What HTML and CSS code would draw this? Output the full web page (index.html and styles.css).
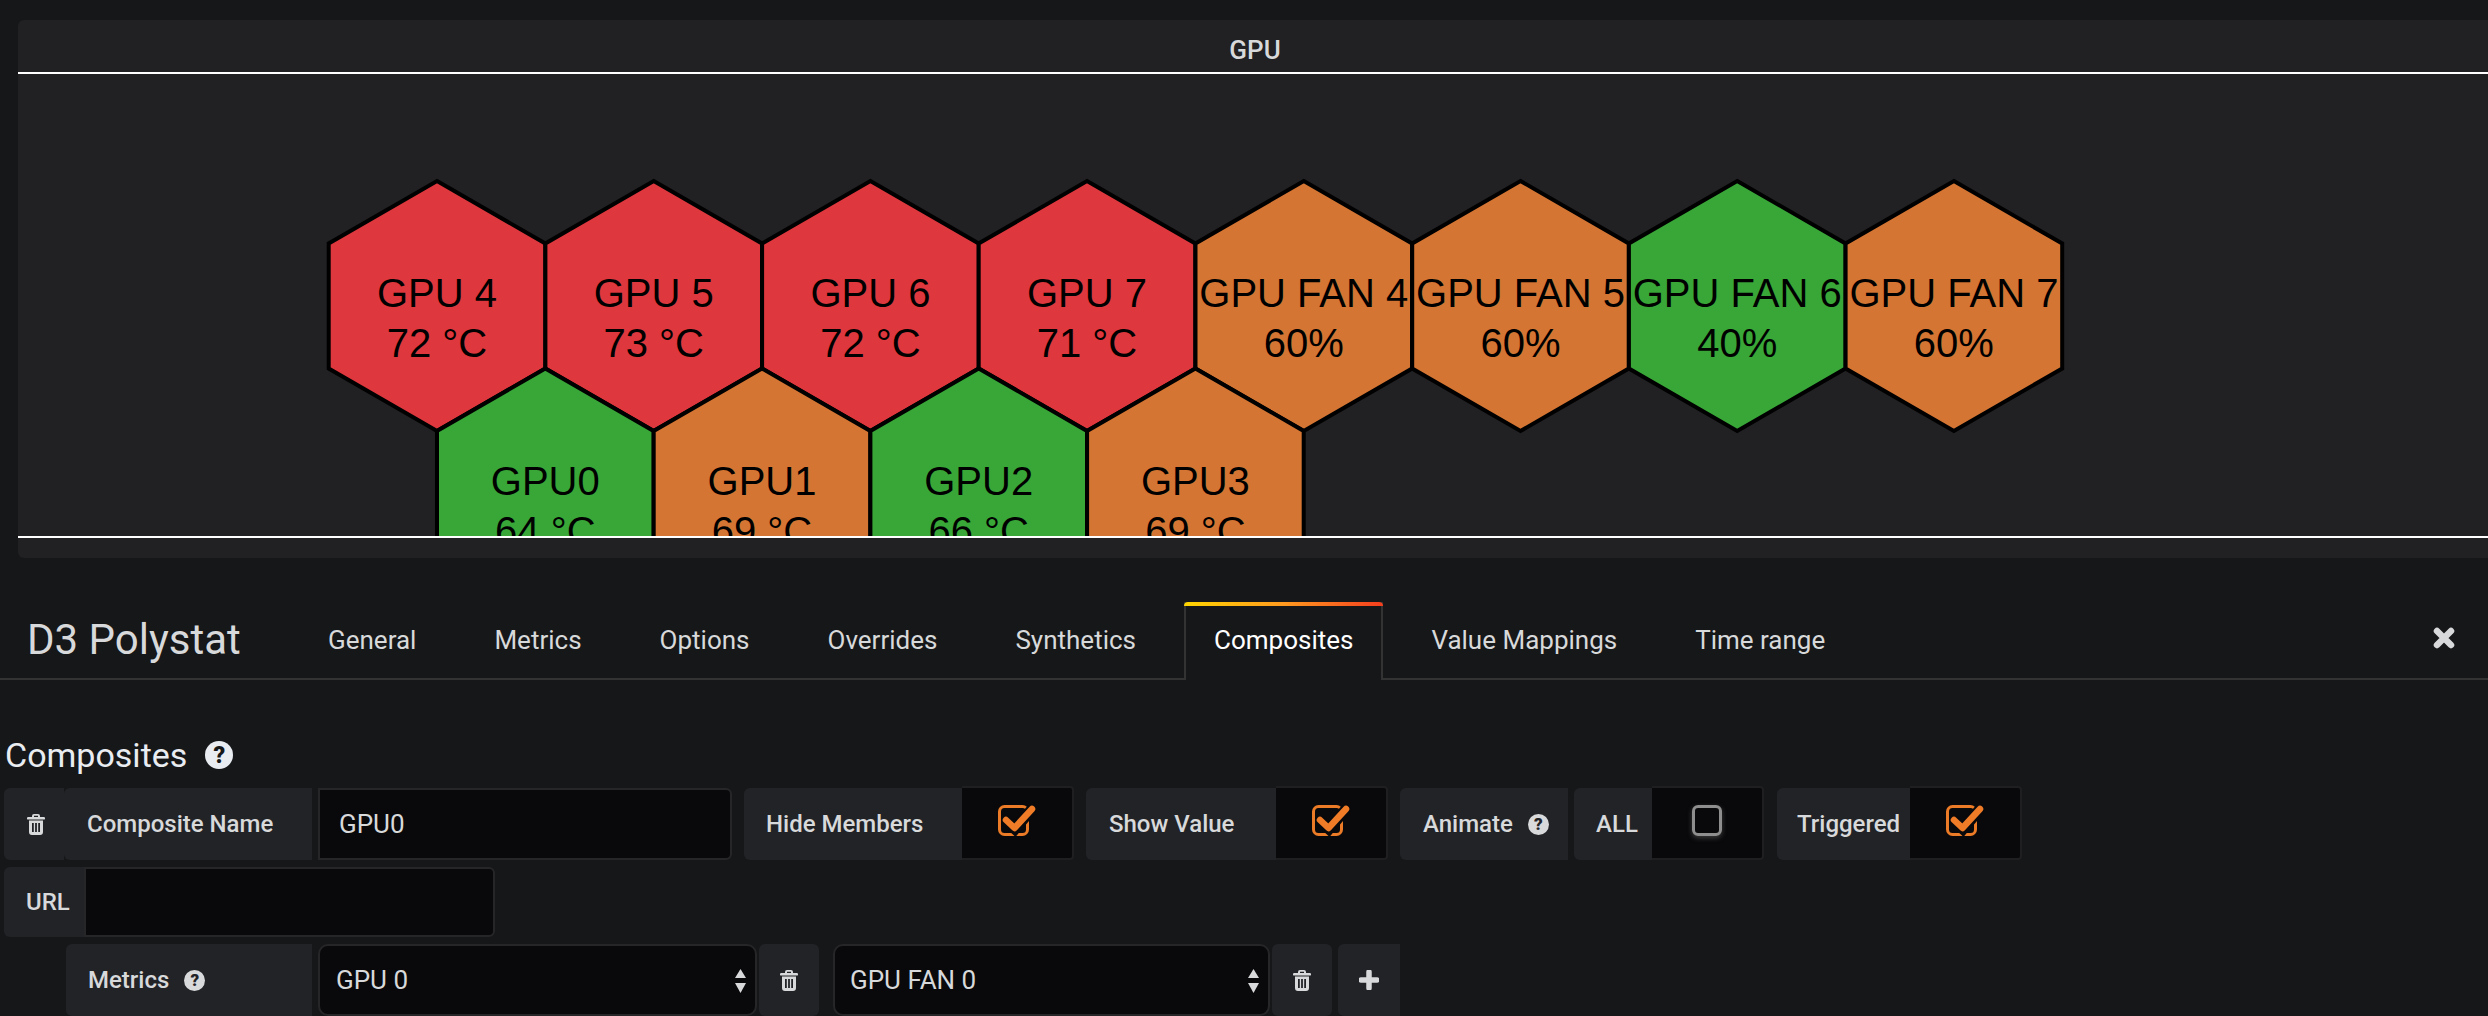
FILE: index.html
```html
<!DOCTYPE html>
<html lang="en">
<head>
    <meta charset="UTF-8">
    <title>D3 Polystat</title>
    <link rel="stylesheet" href="styles.css">
</head>
<body>
    <svg class="defs" width="0" height="0">
        <defs>
            <polygon id="hex" points="0,-125 108.3,-62.5 108.3,62.5 0,125 -108.3,62.5 -108.3,-62.5"></polygon>
            <symbol id="trash" viewBox="0 0 18 21">
                <path fill-rule="evenodd" d="M5 3V2a2 2 0 0 1 2-2h4a2 2 0 0 1 2 2v1h3.8a1.2 1.2 0 0 1 0 2.6H1.2a1.2 1.2 0 0 1 0-2.6zM7 3h4V1.8H7zM2 6.5h14V18a3 3 0 0 1-3 3H5a3 3 0 0 1-3-3zM5 9v9h1.8V9zM8.1 9v9h1.8V9zM11.2 9v9H13V9z"></path>
            </symbol>
            <symbol id="checked" viewBox="0 0 38 32">
                <rect x="1.5" y="2.5" width="28" height="28" rx="5" fill="none" stroke="#eb7b26" stroke-width="3"></rect>
                <polyline points="7,16 17,25 34,5" fill="none" stroke="#09090b" stroke-width="11"></polyline>
                <polyline points="8,16 16.5,24 34,5" fill="none" stroke="#f07c28" stroke-width="6.5" stroke-linecap="round" stroke-linejoin="round"></polyline>
            </symbol>
            <symbol id="arrows" viewBox="0 0 11 24">
                <polygon points="5.5,0 11,9 0,9"></polygon>
                <polygon points="0,14 11,14 5.5,24"></polygon>
            </symbol>
        </defs>
    </svg>

    <div class="panel">
        <div class="panel-title">GPU</div>
        <svg class="polystat" viewBox="18 74 2470 462" height="462">
            <g transform="translate(437 306)"><use href="#hex" class="red"></use><text y="1">GPU 4</text><text y="51">72 °C</text></g>
            <g transform="translate(653.7 306)"><use href="#hex" class="red"></use><text y="1">GPU 5</text><text y="51">73 °C</text></g>
            <g transform="translate(870.4 306)"><use href="#hex" class="red"></use><text y="1">GPU 6</text><text y="51">72 °C</text></g>
            <g transform="translate(1087 306)"><use href="#hex" class="red"></use><text y="1">GPU 7</text><text y="51">71 °C</text></g>
            <g transform="translate(1303.8 306)"><use href="#hex" class="orange"></use><text y="1">GPU FAN 4</text><text y="51">60%</text></g>
            <g transform="translate(1520.5 306)"><use href="#hex" class="orange"></use><text y="1">GPU FAN 5</text><text y="51">60%</text></g>
            <g transform="translate(1737.2 306)"><use href="#hex" class="green"></use><text y="1">GPU FAN 6</text><text y="51">40%</text></g>
            <g transform="translate(1953.9 306)"><use href="#hex" class="orange"></use><text y="1">GPU FAN 7</text><text y="51">60%</text></g>
            <g transform="translate(545.3 493.5)"><use href="#hex" class="green"></use><text y="1">GPU0</text><text y="51">64 °C</text></g>
            <g transform="translate(762 493.5)"><use href="#hex" class="orange"></use><text y="1">GPU1</text><text y="51">69 °C</text></g>
            <g transform="translate(978.7 493.5)"><use href="#hex" class="green"></use><text y="1">GPU2</text><text y="51">66 °C</text></g>
            <g transform="translate(1195.4 493.5)"><use href="#hex" class="orange"></use><text y="1">GPU3</text><text y="51">69 °C</text></g>
        </svg>
    </div>

    <div class="tabbar">
        <h2 class="tabbar-title">D3 Polystat</h2>
        <ul class="tabs">
            <li class="tab">General</li>
            <li class="tab">Metrics</li>
            <li class="tab">Options</li>
            <li class="tab">Overrides</li>
            <li class="tab">Synthetics</li>
            <li class="tab active">Composites</li>
            <li class="tab">Value Mappings</li>
            <li class="tab">Time range</li>
        </ul>
        <svg class="close" width="22" height="22" viewBox="0 0 22 22">
            <path d="M4 4L18 18M18 4L4 18" fill="none" stroke="#d8d9da" stroke-width="6.5" stroke-linecap="round"></path>
        </svg>
    </div>

    <div class="editor">
        <h5 class="section-heading">Composites <span class="help help-large">?</span></h5>

        <div class="form-row row-first">
            <div class="label w-trash"><svg class="icon-trash"><use href="#trash"></use></svg></div>
            <div class="label w-name text-label">Composite Name</div>
            <div class="input w-name-input">GPU0</div>

            <div class="label w-hide text-label group-gap">Hide Members</div>
            <div class="check"><svg class="icon-check"><use href="#checked"></use></svg></div>

            <div class="label w-show text-label group-gap">Show Value</div>
            <div class="check"><svg class="icon-check"><use href="#checked"></use></svg></div>

            <div class="label w-animate text-label group-gap">Animate <span class="help">?</span></div>
            <div class="label w-all text-label">ALL</div>
            <div class="check"><span class="unchecked"></span></div>

            <div class="label w-trig text-label group-gap-wide">Triggered</div>
            <div class="check"><svg class="icon-check"><use href="#checked"></use></svg></div>
        </div>

        <div class="form-row row-url">
            <div class="label w-url text-label">URL</div>
            <div class="input w-url-input"></div>
        </div>

        <div class="form-row row-metrics">
            <div class="label w-metrics text-label">Metrics <span class="help">?</span></div>
            <div class="select w-select-a">GPU 0<svg class="arrows"><use href="#arrows"></use></svg></div>
            <div class="label w-del"><svg class="icon-trash"><use href="#trash"></use></svg></div>
            <div class="select w-select-b">GPU FAN 0<svg class="arrows"><use href="#arrows"></use></svg></div>
            <div class="label w-del"><svg class="icon-trash"><use href="#trash"></use></svg></div>
            <div class="label w-add">
                <svg width="20" height="20" viewBox="0 0 20 20"><path d="M10 2V18M2 10H18" stroke="#d8d9da" stroke-width="5.5" stroke-linecap="round"></path></svg>
            </div>
        </div>
    </div>
</body>
</html>
```

FILE: styles.css
```css
html, body {
    margin: 0;
    height: 1016px;
    overflow: hidden;
}
body {
    background: #161719;
    color: #d8d9da;
    font-family: Roboto, "Liberation Sans", sans-serif;
}
.defs {
    display: block;
    height: 0;
}

/* panel */
.panel {
    margin: 20px 0 0 18px;
    height: 538px;
    background: #212124;
    border-radius: 6px 0 0 6px;
}
.panel-title {
    height: 52px;
    padding-left: 4px;
    line-height: 60px;
    text-align: center;
    font-size: 26px;
    font-weight: 500;
}
.polystat {
    display: block;
    width: 100%;
    border-top: 2px solid #fff;
    border-bottom: 2px solid #fff;
}
.polystat use {
    stroke: #000;
    stroke-width: 4;
}
.polystat text {
    font-family: "Liberation Sans", Arial, sans-serif;
    font-size: 40px;
    text-anchor: middle;
    fill: #000;
}
.red { fill: #de373d; }
.orange { fill: #d47533; }
.green { fill: #38a738; }

/* tabs */
.tabbar {
    display: flex;
    align-items: flex-end;
    height: 76px;
    margin-top: 44px;
    padding-left: 27px;
    border-bottom: 2px solid #333;
}
.tabbar-title {
    width: 271px;
    margin: 0;
    font-size: 42px;
    font-weight: 400;
    line-height: 76px;
    color: #d8d9da;
}
.tabs {
    display: flex;
    margin: 0;
    padding: 0;
    list-style: none;
}
.tab {
    height: 76px;
    line-height: 76px;
    padding: 0 30px;
    margin-right: 18px;
    font-size: 26px;
    box-sizing: border-box;
}
.tab.active {
    position: relative;
    height: 78px;
    margin-bottom: -2px;
    border: 2px solid #333;
    border-top: 0;
    border-bottom: 0;
    padding: 0 28px;
    background: #161719;
    color: #fff;
}
.tab.active::before {
    content: "";
    position: absolute;
    top: 0;
    left: -2px;
    right: -2px;
    height: 4px;
    border-radius: 4px 4px 0 0;
    background: linear-gradient(to right, #ffd500, #ff9a1f 50%, #f53e1e);
}
.close {
    margin: 0 33px 29px auto;
}

/* composites form */
.editor {
    padding-left: 4px;
}
.section-heading {
    display: flex;
    align-items: center;
    gap: 18px;
    margin: 0 0 0 1px;
    height: 108px;
    padding-top: 42px;
    font-size: 34px;
    font-weight: 400;
    color: #e9edf2;
    box-sizing: border-box;
}
.form-row {
    display: flex;
    height: 72px;
    margin-bottom: 7px;
}
.row-url {
    height: 70px;
}
.row-metrics {
    margin-left: 62px;
}
.label {
    display: flex;
    align-items: center;
    justify-content: center;
    flex: none;
    height: 100%;
    box-sizing: border-box;
    background: #222327;
    border-radius: 6px 0 0 6px;
}
.text-label {
    justify-content: flex-start;
    padding-left: 22px;
    font-size: 24px;
    font-weight: 500;
    white-space: nowrap;
}
.input, .select {
    flex: none;
    height: 100%;
    box-sizing: border-box;
    background: #09090b;
    border: 2px solid #262628;
    font-size: 26px;
    line-height: 68px;
}
.input {
    border-radius: 0 6px 6px 0;
    padding-left: 19px;
}
.select {
    position: relative;
    border-radius: 10px;
    padding-left: 16px;
}
.check {
    display: flex;
    align-items: center;
    justify-content: center;
    flex: none;
    width: 112px;
    height: 74px;
    margin-top: -2px;
    padding-bottom: 6px;
    box-sizing: border-box;
    background: #09090b;
    border: 2px solid #1f1f21;
    border-left: 0;
    border-radius: 0 4px 4px 0;
}
.icon-check {
    width: 38px;
    height: 32px;
}
.unchecked {
    width: 30px;
    height: 31px;
    box-sizing: border-box;
    border: 3px solid #8e8e8e;
    border-radius: 6px;
    box-shadow: 0 2px 5px rgba(110, 110, 110, 0.5);
}
.icon-trash {
    width: 18px;
    height: 21px;
    fill: #d8d9da;
}
.arrows {
    position: absolute;
    right: 9px;
    top: 23px;
    width: 11px;
    height: 24px;
    fill: #d8d9da;
}
.help {
    display: inline-flex;
    align-items: center;
    justify-content: center;
    width: 21px;
    height: 21px;
    margin-left: 15px;
    border-radius: 50%;
    background: #d8d9da;
    color: #222327;
    font-size: 17px;
    font-weight: 900;
    line-height: 1;
}
.help-large {
    width: 28px;
    height: 28px;
    margin-left: 0;
    background: #e9edf2;
    color: #161719;
    font-size: 23px;
}

/* cell widths */
.w-trash { width: 60px; padding-left: 3px; }
.w-name { width: 248px; padding-left: 23px; }
.w-name-input { width: 414px; margin-left: 6px; }
.w-hide { width: 218px; }
.w-show { width: 190px; padding-left: 23px; }
.w-animate { width: 168px; padding-left: 23px; }
.w-all { width: 78px; margin-left: 6px; }
.w-trig { width: 133px; padding-left: 20px; }
.w-url { width: 80px; }
.w-url-input { width: 411px; }
.w-metrics { width: 246px; }
.w-select-a { width: 439px; margin-left: 6px; }
.w-select-b { width: 437px; margin-left: 14px; padding-left: 15px; }
.w-del { width: 60px; margin-left: 2px; border-radius: 6px; }
.w-add { width: 62px; margin-left: 6px; border-radius: 6px 0 0 6px; }
.group-gap { margin-left: 12px; }
.group-gap-wide { margin-left: 13px; }
```
